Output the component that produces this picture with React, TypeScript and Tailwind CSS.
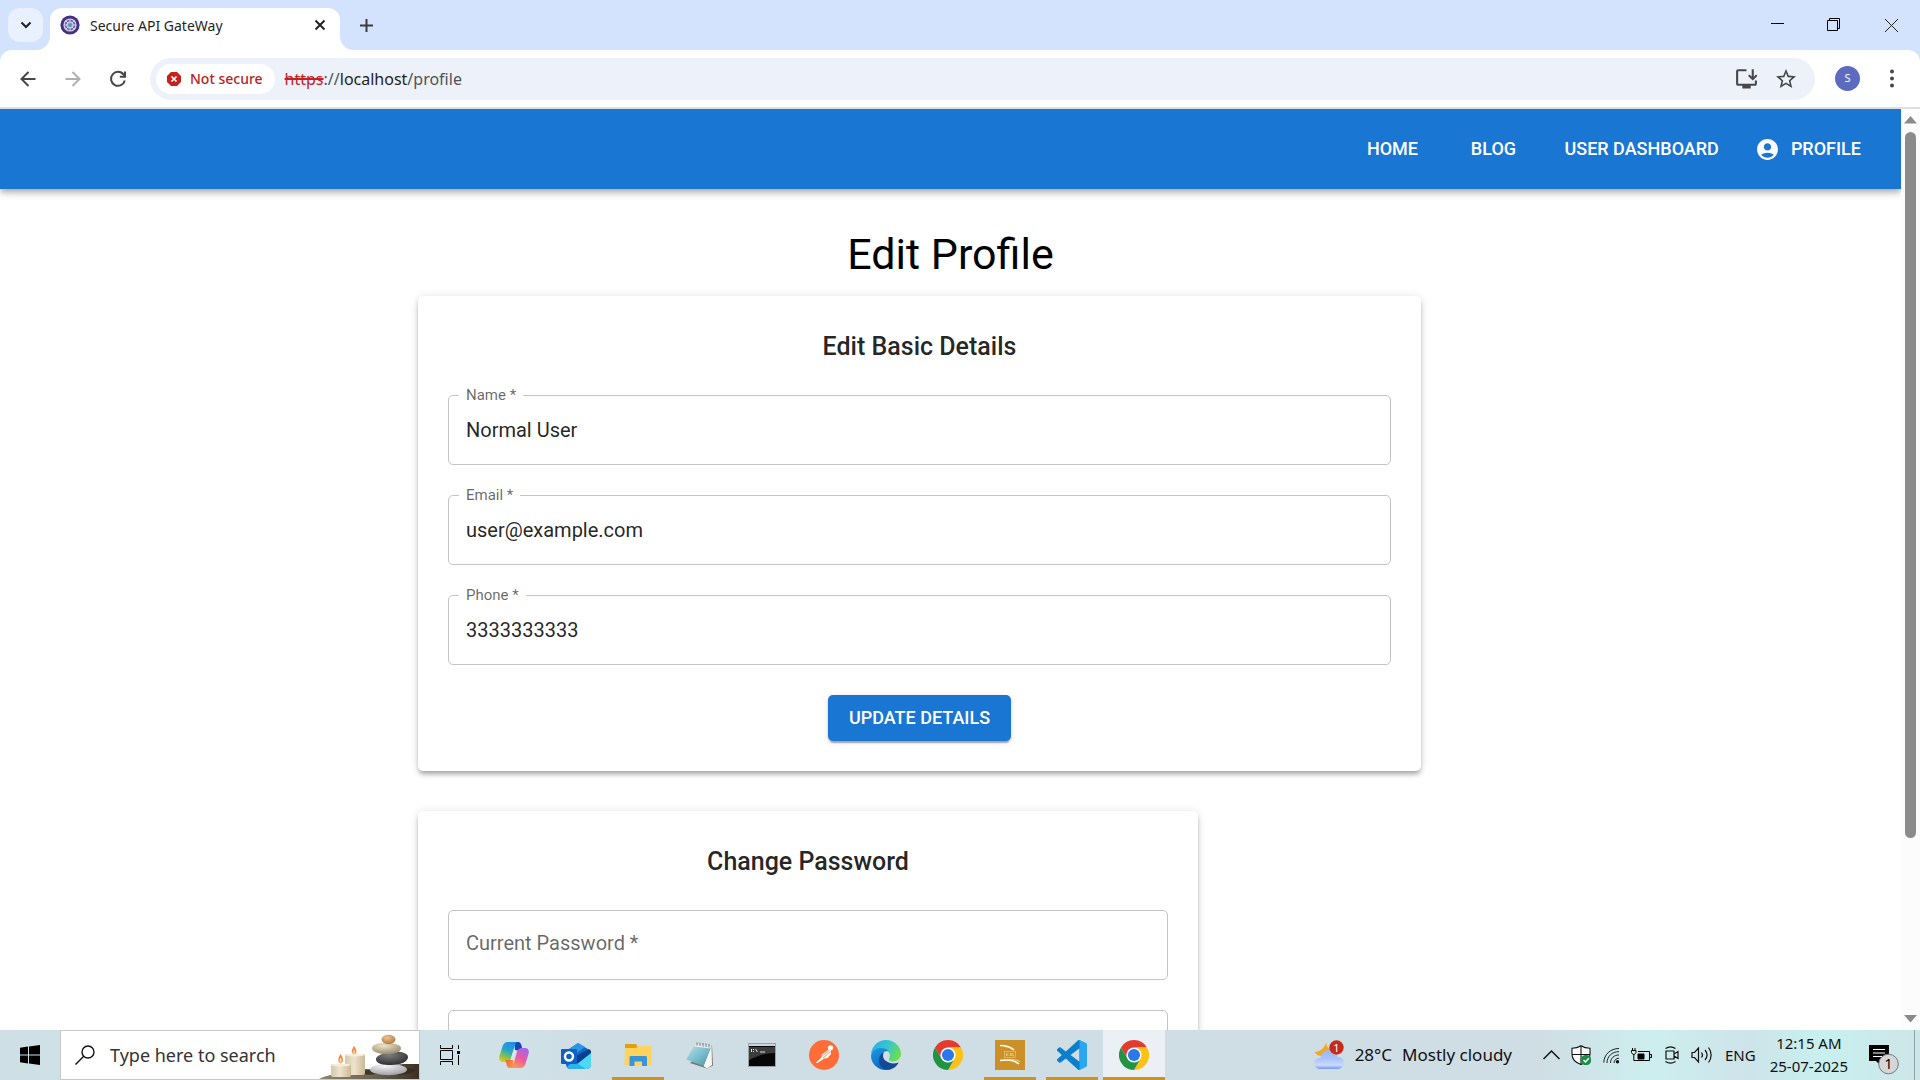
import React from "react";

const ui = "font-['Noto_Sans','Open_Sans',sans-serif]";

/* ---------- browser window ---------- */

function Favicon() {
  return (
    <svg viewBox="0 0 20 20" className="size-5 shrink-0">
      <circle cx="10" cy="10" r="9.6" fill="#46307f" />
      <circle cx="10" cy="10" r="6" fill="#6f62a6" stroke="#d9d5ec" strokeWidth="1.2" />
      <path d="M10 4v12M4 10h12M5.800 5.800l8.400 8.400M14.200 5.800l-8.400 8.400" stroke="#d6d3ea" strokeWidth="1" />
      <circle cx="10" cy="10" r="3.200" fill="#a9a3cf" stroke="#e6e3f3" strokeWidth="0.800" />
      <circle cx="10" cy="10" r="1.800" fill="#2fa6b2" />
    </svg>
  );
}

function TabStrip() {
  return (
    <div className="flex h-[50px] shrink-0 items-end justify-between bg-[#d3e3fd]">
      <div className="flex items-end">
        <button aria-label="Search tabs" className="mb-2 ml-2 grid h-[34px] w-[35px] place-items-center rounded-xl bg-[#e9f1fe]">
          <svg viewBox="0 0 12 8" className="h-2 w-3" fill="none" stroke="#1f1f1f" strokeWidth="2">
            <path d="M1.5 1.5 6 6l4.500-4.500" />
          </svg>
        </button>
        <div className="relative ml-[7px] flex h-[42px] w-[290px] items-center rounded-t-xl bg-white px-2.5 pb-2">
          <svg viewBox="0 0 14 14" className="absolute bottom-0 -left-[14px] size-[14px]">
            <path d="M14 0v14H0C8 14 14 8 14 0Z" fill="#fff" />
          </svg>
          <svg viewBox="0 0 14 14" className="absolute -right-[14px] bottom-0 size-[14px]">
            <path d="M0 0v14h14C6 14 0 8 0 0Z" fill="#fff" />
          </svg>
          <Favicon />
          <span className="ml-2.5 flex-1 text-[14px] text-[#1f1f1f]">Secure API GateWay</span>
          <button aria-label="Close tab" className="grid size-5 place-items-center">
            <svg viewBox="0 0 12 12" className="size-3" stroke="#1f1f1f" strokeWidth="1.9">
              <path d="m1.500 1.500 9 9M10.500 1.500l-9 9" />
            </svg>
          </button>
        </div>
        <button aria-label="New tab" className="mb-[18px] ml-5 grid size-[13px] place-items-center">
          <svg viewBox="0 0 13 13" className="size-[13px]" stroke="#3c3c3c" strokeWidth="2">
            <path d="M6.500 0v13M0 6.500h13" />
          </svg>
        </button>
      </div>
      <div className="flex h-full items-center">
        <button aria-label="Minimize" className="grid h-full w-14 place-items-center">
          <svg viewBox="0 0 13 13" className="size-[13px]" stroke="#000">
            <path d="M0 4.500h13" />
          </svg>
        </button>
        <button aria-label="Restore" className="grid h-full w-[57px] place-items-center">
          <svg viewBox="0 0 14 14" className="size-[14px]" fill="none" stroke="#000">
            <path d="M.5 2.500h10v10H.5zM2.500 2.500v-2h10v10h-2" />
          </svg>
        </button>
        <button aria-label="Close" className="grid h-full w-[58px] place-items-center">
          <svg viewBox="0 0 13 13" className="size-[13px]" stroke="#222">
            <path d="m0 0 13 13M13 0 0 13" />
          </svg>
        </button>
      </div>
    </div>
  );
}

function Toolbar() {
  return (
    <div className="shrink-0 bg-[#d3e3fd]">
      <div className="flex h-[59px] items-center rounded-t-xl border-b-2 border-[#dfdfdf] bg-white">
        <button aria-label="Back" className="ml-5 grid size-4 place-items-center">
          <svg viewBox="0 0 16 16" className="size-4" fill="none" stroke="#474747" strokeWidth="2">
            <path d="M15.500 8H2M8.500 1 1.500 8l7 7" />
          </svg>
        </button>
        <button aria-label="Forward" className="ml-[29px] grid size-4 place-items-center">
          <svg viewBox="0 0 16 16" className="size-4" fill="none" stroke="#b0b0b0" strokeWidth="2">
            <path d="M.5 8H14M7.500 1l7 7-7 7" />
          </svg>
        </button>
        <button aria-label="Reload" className="ml-7 grid size-[18px] place-items-center">
          <svg viewBox="0 0 18 18" className="size-[18px]" fill="none" stroke="#474747" strokeWidth="2">
            <path d="M15.800 10.500A7 7 0 1 1 14.600 4.600L16 6.500" />
            <path d="M16 1.500v5.200h-5.200" />
          </svg>
        </button>
        <div className="ml-[23px] flex h-[42px] flex-1 items-center rounded-full bg-[#ecf1fa] pl-1.5">
          <button className="flex h-[30px] items-center gap-[9px] rounded-full bg-white pr-3 pl-[11px] text-[14px] font-medium text-[#b3261e]">
            <svg viewBox="0 0 14 14" className="size-[14px]">
              <path d="M4 0h6l4 4v6l-4 4H4l-4-4V4Z" fill="#c5221f" />
              <path d="m4.500 4.500 5 5m0-5-5 5" stroke="#fff" strokeWidth="1.700" />
            </svg>
            Not secure
          </button>
          <div className="ml-2.5 flex-1 text-[16px] text-[#505356]">
            <span className="text-[#c5221f] line-through decoration-2">https</span>://
            <span className="text-[#1f1f1f]">localhost</span>/profile
          </div>
          <button aria-label="Install app" className="mr-[15px] size-[25px]">
            <svg viewBox="0 0 24 24" className="size-[25px]" fill="#474747">
              <path d="M20 17H4V5h8V3H4c-1.100 0-2 .9-2 2v12c0 1.100.9 2 2 2h4v2.500h8V19h4c1.100 0 2-.9 2-2v-3h-2v3z" />
              <path d="m18 14 4.500-4.500-1.400-1.400-2.100 2.100V3h-2v7.200l-2.100-2.100-1.400 1.400z" />
            </svg>
          </button>
          <button aria-label="Bookmark this tab" className="mr-[17px] size-6">
            <svg viewBox="0 0 24 24" className="size-6" fill="#474747">
              <path d="m22 9.240-7.190-.62L12 2 9.190 8.630 2 9.240l5.460 4.730L5.820 21 12 17.270 18.180 21l-1.630-7.030zM12 15.400l-3.760 2.270 1-4.280-3.320-2.880 4.380-.38L12 6.100l1.710 4.040 4.380.38-3.320 2.880 1 4.280z" />
            </svg>
          </button>
        </div>
        <button aria-label="Account" className="ml-5 grid size-[25px] place-items-center rounded-full bg-[#5c6bc0] text-[11px] text-white">
          S
        </button>
        <button aria-label="Menu" className="mr-[18px] ml-[22px] size-5">
          <svg viewBox="0 0 20 20" className="size-5" fill="#474747">
            <circle cx="10" cy="2.500" r="2" />
            <circle cx="10" cy="9.500" r="2" />
            <circle cx="10" cy="16.500" r="2" />
          </svg>
        </button>
      </div>
    </div>
  );
}

/* ---------- web page ---------- */

const navItem = "flex h-12 min-w-20 items-center justify-center px-2.5 pb-0.5";

function AppBar() {
  return (
    <nav className="relative z-10 flex h-20 items-center justify-end gap-[21px] bg-[#1976d2] pr-[30px] text-[18px] font-medium text-white shadow-[0_2px_5px_-1px_rgba(0,0,0,.2),0_5px_6px_0_rgba(0,0,0,.14),0_1px_12px_0_rgba(0,0,0,.12)]">
      <a href="#home" className={navItem}>HOME</a>
      <a href="#blog" className={navItem}>BLOG</a>
      <a href="#dashboard" className={navItem}>USER DASHBOARD</a>
      <a href="#profile" className="flex h-12 items-center gap-[11px] pr-2.5 pl-[5px]">
        <svg viewBox="0 0 24 24" className="size-[25px]" fill="currentColor">
          <path d="M12 2C6.480 2 2 6.480 2 12s4.480 10 10 10 10-4.480 10-10S17.520 2 12 2m0 4c1.930 0 3.500 1.570 3.500 3.500S13.930 13 12 13s-3.500-1.570-3.500-3.500S10.070 6 12 6m0 14c-2.030 0-4.430-.82-6.140-2.880C7.550 15.800 9.680 15 12 15s4.450.8 6.140 2.120C16.430 19.180 14.030 20 12 20" />
        </svg>
        <span className="pb-0.5">PROFILE</span>
      </a>
    </nav>
  );
}

const inputBox =
  "block h-[70px] w-full rounded-[5px] border border-[#c4c4c4] bg-transparent px-[17px] text-[20px] text-black/87 outline-none";

function Field({ id, label, value, type = "text" }: { id: string; label: string; value?: string; type?: string }) {
  return (
    <div className="relative">
      <input id={id} type={type} defaultValue={value} className={inputBox} />
      {value ? (
        <label htmlFor={id} className="absolute -top-2.5 left-[11px] bg-white px-[7px] text-[15px] leading-5 text-black/60">
          {label} *
        </label>
      ) : (
        <label htmlFor={id} className="absolute top-[19px] left-[18px] text-[20px] leading-7 text-black/60">
          {label} *
        </label>
      )}
    </div>
  );
}

function Card({ title, className, children }: { title: string; className: string; children: React.ReactNode }) {
  return (
    <form
      className={
        "flex w-full flex-col gap-[30px] rounded-[5px] bg-white p-[30px] shadow-[0_4px_4px_-2px_rgba(0,0,0,.2),0_4px_5px_0_rgba(0,0,0,.14),0_1px_10px_0_rgba(0,0,0,.12)] " +
        className
      }
    >
      <h2 className="pt-[3px] text-center text-[25px] leading-9 font-medium text-black/87">{title}</h2>
      {children}
    </form>
  );
}

function WebPage() {
  return (
    <div className="flex min-h-0 flex-1 bg-white">
      <div className="min-w-0 flex-1 overflow-hidden font-['Roboto',sans-serif]">
        <AppBar />
        <h1 className="mt-[39px] mb-4 text-center text-[43px] leading-[52px] text-black">Edit Profile</h1>
        <div className="mx-auto flex max-w-[1125px] flex-col gap-10 px-[30px]">
          <Card title="Edit Basic Details" className="max-w-[1003px]">
            <Field id="name" label="Name" value="Normal User" />
            <Field id="email" label="Email" value="user@example.com" />
            <Field id="phone" label="Phone" value="3333333333" />
            <button
              type="button"
              className="h-[46px] self-center rounded-[5px] bg-[#1976d2] px-[21px] pb-0.5 text-[18px] font-medium text-white shadow-[0_4px_1px_-2px_rgba(0,0,0,.2),0_2px_2px_0_rgba(0,0,0,.14),0_1px_6px_0_rgba(0,0,0,.12)]"
            >
              UPDATE DETAILS
            </button>
          </Card>
          <Card title="Change Password" className="max-w-[780px]">
            <Field id="current" label="Current Password" type="password" />
            <input type="password" aria-label="New Password" className={inputBox} />
          </Card>
        </div>
      </div>
      <div className="flex w-[19px] shrink-0 flex-col items-center bg-[#fcfcfc] py-[7px]">
        <svg viewBox="0 0 13 8" className="h-2 w-[13px]" fill="#8b8b8b">
          <path d="M6.500 0 13 7.500H0Z" />
        </svg>
        <div className="mt-2 w-[11px] flex-[707] rounded-full bg-[#8b8b8b]" />
        <div className="flex-[177]" />
        <svg viewBox="0 0 13 8" className="h-2 w-[13px]" fill="#8b8b8b">
          <path d="M6.500 7.500 0 0h13Z" />
        </svg>
      </div>
    </div>
  );
}

/* ---------- task bar ---------- */

function SearchScene() {
  return (
    <svg viewBox="0 0 100 48" className="h-12 w-[100px] shrink-0">
      <defs>
        <linearGradient id="ground" x1="0" x2="1">
          <stop offset="0" stopColor="#8c8672" />
          <stop offset="0.500" stopColor="#6f6755" />
          <stop offset="1" stopColor="#3b3022" />
        </linearGradient>
        <linearGradient id="wax" x1="0" x2="1">
          <stop offset="0" stopColor="#d5c8ac" />
          <stop offset="0.450" stopColor="#ede3ce" />
          <stop offset="1" stopColor="#cbb994" />
        </linearGradient>
        <radialGradient id="s1" cx=".4" cy=".3" r=".8">
          <stop offset="0" stopColor="#edc28c" />
          <stop offset="1" stopColor="#a8733d" />
        </radialGradient>
        <radialGradient id="s2" cx=".4" cy=".25" r=".8">
          <stop offset="0" stopColor="#eee3c8" />
          <stop offset="1" stopColor="#96876a" />
        </radialGradient>
        <radialGradient id="s3" cx=".4" cy=".25" r=".8">
          <stop offset="0" stopColor="#7d7d80" />
          <stop offset="1" stopColor="#2b2b2e" />
        </radialGradient>
        <radialGradient id="s4" cx=".4" cy=".2" r=".8">
          <stop offset="0" stopColor="#f7f7f9" />
          <stop offset="1" stopColor="#9d9da3" />
        </radialGradient>
      </defs>
      <path d="M0 48c8-4 20-6 35-7 20-2 35-7 50-8h15v15Z" fill="url(#ground)" />
      <path d="M44 43c8 2 22-1 20-4l-18-1ZM70 43c10 2 24 0 27-4l-12-3Z" fill="#33291d" opacity="0.800" />
      <rect x="26" y="23" width="20" height="21" rx="2" fill="url(#wax)" />
      <ellipse cx="36" cy="24" rx="9.500" ry="1.500" fill="#f5eedf" />
      <rect x="12" y="33" width="20" height="13" rx="2" fill="url(#wax)" />
      <ellipse cx="22" cy="34" rx="9.500" ry="1.500" fill="#f5eedf" />
      <path d="M35 15c3 3.500 3.500 7.500.5 8-3.500 0-3.500-4-.5-8ZM21.500 23c3 3.500 3.500 8.500.5 9-3.500 0-3.500-4.500-.5-9Z" fill="#f58a45" />
      <path d="M35 18.500c1.500 2 1.500 3.800.3 4-1.500 0-1.500-2-.3-4ZM21.500 26.500c1.500 2 1.500 4.500.3 4.800-1.500 0-1.500-2.800-.3-4.800Z" fill="#ffe09a" />
      <ellipse cx="69.500" cy="38.500" rx="18.500" ry="5.800" fill="url(#s4)" />
      <path d="M57 29c-1-4 6-7 15-8 10-1 17 1 17 5 0 5-8 8-17 8-8 0-14-1-15-5Z" fill="url(#s3)" />
      <path d="M53 17c0-4 8-5 15-5s14 2 14 5c0 4-6 6-14 6s-15-2-15-6Z" fill="url(#s2)" />
      <ellipse cx="69.500" cy="8.500" rx="7" ry="4.700" fill="url(#s1)" />
    </svg>
  );
}

function TaskView() {
  return (
    <svg viewBox="0 0 20 20" className="size-5" fill="none" stroke="#000">
      <path d="M.5 0v3.500h12V0M.5 20v-3.500h12V20M.5 5.500h12v9H.5ZM18.500 0v4M18.500 10v10" />
      <path d="M17 6h3v3h-3z" fill="#000" stroke="none" />
    </svg>
  );
}

function Copilot() {
  return (
    <svg viewBox="0 0 30 28" className="h-7 w-[30px]">
      <defs>
        <linearGradient id="cpA" x1=".7" y1="0" x2=".3" y2="1">
          <stop offset="0" stopColor="#1b8fe8" />
          <stop offset="0.450" stopColor="#2aa5c9" />
          <stop offset="0.750" stopColor="#7fc24a" />
          <stop offset="1" stopColor="#e8c21f" />
        </linearGradient>
        <linearGradient id="cpB" x1=".7" y1="0" x2=".2" y2="1">
          <stop offset="0" stopColor="#a864e8" />
          <stop offset="0.500" stopColor="#ec5b9c" />
          <stop offset="1" stopColor="#ff9a50" />
        </linearGradient>
        <linearGradient id="cpC" x1="0" y1="0" x2="1" y2="1">
          <stop offset="0" stopColor="#f4553c" />
          <stop offset="1" stopColor="#f9a04a" />
        </linearGradient>
      </defs>
      <path d="M15 1h4c2 0 3 1.500 3.500 3.500L23.500 9H20c-2 0-3 1-3.500 3Z" fill="#1448b8" />
      <path d="M9 1h9c-1.500 1-2 2.500-3 6l-3 10c-1 3-2.500 4-5 4H4c-3 0-4.500-2.500-3.500-6L3.500 5.500C4.500 2.500 6 1 9 1Z" fill="url(#cpA)" />
      <path d="M15 27H11c-2 0-3-1.500-3.500-3.500L6.500 19H10c2 0 3-1 3.500-3Z" fill="url(#cpC)" />
      <path d="M21 27h-9c1.500-1 2-2.500 3-6l3-10c1-3 2.500-4 5-4h3c3 0 4.500 2.500 3.500 6l-3 9.500C25.500 25.500 24 27 21 27Z" fill="url(#cpB)" />
      <path d="M14.500 9h3.200l-3 10h-3Z" fill="#dce6ea" />
    </svg>
  );
}

function Outlook() {
  return (
    <svg viewBox="0 0 30 27" className="h-[27px] w-[30px]">
      <path d="M5 9 17 1l13 8v13c0 3-2 5-5 5H10c-3 0-5-2-5-5Z" fill="#1267c4" />
      <path d="M5 9 17 1l7 4L9 16Z" fill="#2a96e6" />
      <path d="M28 7l2 2v4L14 23l-4-6Z" fill="#0b3f8f" />
      <path d="M30 11v11c0 3-2 5-5 5H10L30 11Z" fill="#4fd8f5" />
      <path d="M12 19l13 8H10c-2 0-3-1-4-2Z" fill="#2cb2ec" />
      <rect x="0" y="7" width="16" height="15" rx="1" fill="#0f62c0" />
      <circle cx="8" cy="14.500" r="4" fill="none" stroke="#fff" strokeWidth="2.400" />
    </svg>
  );
}

function Explorer() {
  return (
    <svg viewBox="0 0 28 24" className="h-6 w-7">
      <path d="M1 1h11l2 3-2 3H1Z" fill="#e0a010" />
      <path d="M1 5h11l2-2h12c1 0 1.500.5 1.500 1.500V21c0 1-.5 1.500-1.500 1.500H2c-1 0-1.500-.5-1.500-1.500Z" fill="#ffd35c" />
      <path d="M5.500 23V14.500c0-1 .5-1.500 1.500-1.500h14.500c1 0 1.500.5 1.500 1.500V23h-5v-4.500h-7.500V23Z" fill="#3a95d8" />
    </svg>
  );
}

function Notepad() {
  return (
    <svg viewBox="0 0 28 27" className="h-[27px] w-7">
      <defs>
        <linearGradient id="np" x1="0" y1="0" x2="1" y2="1">
          <stop offset="0" stopColor="#bfe3ea" />
          <stop offset="0.500" stopColor="#7fc0d0" />
          <stop offset="1" stopColor="#4a93a8" />
        </linearGradient>
      </defs>
      <path d="m26 3.500 1 20-6 3L4 21Z" fill="#777a70" />
      <path d="m25.500 4-8 20 3.500 2.500 5-3.500Z" fill="#f7f7f2" />
      <path d="M10 1.500 25.500 3.500l-8 20.500L0 17.500Z" fill="url(#np)" />
      <path d="M10 1.500 25.500 3.500l-.8 3L8.500 4.500Z" fill="#e9edec" />
      <path d="M11 .5v3M14 .8v3M17 1v3.500M20 1.500v3.500M23 2v3.500" stroke="#666" strokeWidth="0.900" />
    </svg>
  );
}

function Terminal() {
  return (
    <svg viewBox="0 0 28 24" className="h-6 w-7">
      <rect x="0.500" y="0.500" width="27" height="23" fill="#070707" stroke="#9aa3a8" />
      <rect x="1" y="1" width="26" height="2" fill="#cdd3d6" />
      <path d="M1 4h26v6C18 10 9 13 1 17Z" fill="#3c3c3c" />
      <path d="M3.500 6v3M5.500 6v1M5.500 8v1M7.500 6l2 3M12 9h5" stroke="#ddd" />
    </svg>
  );
}

function Postman() {
  return (
    <svg viewBox="0 0 30 30" className="size-[30px]">
      <circle cx="15" cy="15" r="15" fill="#ff6c37" />
      <circle cx="21.500" cy="7.800" r="2.600" fill="#fff" />
      <path d="M19.500 9.500 13 14.500l-1.500 4L7 22.500l1 .8 5.500-3.500 1-1 4-.8 3.500-4-.5-3.500Z" fill="#fff" />
      <path d="m12 17 8-6.500M14 18l7-6" stroke="#ff6c37" strokeWidth="0.700" />
    </svg>
  );
}

function Edge() {
  return (
    <svg viewBox="0 0 32 32" className="size-[30px]">
      <defs>
        <linearGradient id="edA" x1="0" y1=".2" x2="1" y2=".6">
          <stop offset="0" stopColor="#2bb0e8" />
          <stop offset="0.500" stopColor="#36c5cf" />
          <stop offset="1" stopColor="#6fe04a" />
        </linearGradient>
        <linearGradient id="edB" x1="0" y1="0" x2=".6" y2="1">
          <stop offset="0" stopColor="#1c9ce4" />
          <stop offset="1" stopColor="#0c62be" />
        </linearGradient>
      </defs>
      <path d="M0 15C1 6 8 0 16 0c9 0 16 7 16 14.500C32 20 28 23 23.500 23c-4 0-5-1.500-4-3.500C22 15 18 10 12 10 7 10 3 12 0 15Z" fill="url(#edA)" />
      <path d="M0 17C1 8 13 6 19 12c-5-1-8 3-8 8 0 6 5 10 11 11-2 .7-4 1-6 1C7 32 0 25 0 17Z" fill="url(#edB)" />
      <path d="M14 13c-2 2.500-1.500 7 2 9.500 4 3 9 3 13.500 1.500C27 29 22 32 17 31.500c-6 0-9-6-8.500-11C9 16.500 11 14 14 13Z" fill="#124a98" />
    </svg>
  );
}

function Chrome() {
  return (
    <svg viewBox="0 0 48 48" className="size-[30px]">
      <circle cx="24" cy="24" r="13" fill="#fff" />
      <path d="M24 12h20.780a23.990 23.990 0 0 0-41.560 0L13.600 30A11.990 11.990 0 0 1 24 12Z" fill="#e33b2e" />
      <path d="M34.390 30 24 48a23.990 23.990 0 0 0 20.780-36H24a11.990 11.990 0 0 1 10.390 18Z" fill="#fbc116" />
      <path d="M13.610 30 3.220 12A23.990 23.990 0 0 0 24 48l10.390-18a11.990 11.990 0 0 1-20.780 0Z" fill="#229342" />
      <circle cx="24" cy="24" r="9.700" fill="#2b78ea" />
    </svg>
  );
}

function Kali() {
  return (
    <svg viewBox="0 0 30 30" className="size-[30px]">
      <rect width="30" height="30" fill="#cb9127" />
      <path d="M5 5.500c6 0 11 1.500 14 4.500M5 20.500c7-1 14-.5 19 3.500" fill="none" stroke="#fff" strokeWidth="1.500" />
      <path d="M9 6.500c4 .5 7 1.500 9 3.500M12 19.500c6 0 10 .5 13 2" fill="none" stroke="#f4e6c8" strokeWidth="0.800" />
      <rect x="9.500" y="11.500" width="11" height="6" fill="none" stroke="#e3c587" strokeWidth="0.700" />
      <path d="M11.500 13v3M13.500 13l-1.500 1.500 1.500 1.500M15 16l.8-3 .8 3M18 13v3h1" fill="none" stroke="#efdcb4" strokeWidth="0.700" />
    </svg>
  );
}

function VsCode() {
  return (
    <svg viewBox="0 0 24 24" className="size-[30px]">
      <path
        d="M23.150 2.587 18.210.21a1.494 1.494 0 0 0-1.705.29l-9.460 8.630-4.120-3.128a.999.999 0 0 0-1.276.057L.327 7.261A1 1 0 0 0 .326 8.740L3.899 12 .326 15.260a1 1 0 0 0 .001 1.479L1.650 17.940a.999.999 0 0 0 1.276.057l4.120-3.128 9.460 8.630a1.492 1.492 0 0 0 1.704.29l4.942-2.377A1.500 1.500 0 0 0 24 20.060V3.939a1.500 1.500 0 0 0-.85-1.352zm-5.146 14.861L10.826 12l7.178-5.448v10.896z"
        fill="#0a7fcb"
      />
      <path d="M18 .2 23.150 2.587c.5.200.85.700.85 1.352V20.060c0 .6-.3 1.100-.85 1.352L18 23.800Z" fill="#2aa6f2" />
    </svg>
  );
}

const apps = [
  { name: "Copilot", icon: <Copilot />, running: false, active: false },
  { name: "Outlook", icon: <Outlook />, running: false, active: false },
  { name: "File Explorer", icon: <Explorer />, running: true, active: false },
  { name: "Notepad", icon: <Notepad />, running: false, active: false },
  { name: "Command Prompt", icon: <Terminal />, running: false, active: false },
  { name: "Postman", icon: <Postman />, running: false, active: false },
  { name: "Edge", icon: <Edge />, running: false, active: false },
  { name: "Chrome", icon: <Chrome />, running: false, active: false },
  { name: "Kali", icon: <Kali />, running: true, active: false },
  { name: "Visual Studio Code", icon: <VsCode />, running: true, active: false },
  { name: "Chrome window", icon: <Chrome />, running: true, active: true },
];

function Weather() {
  return (
    <svg viewBox="0 0 30 30" className="size-[30px]">
      <defs>
        <linearGradient id="cloud" x1="0" y1="0" x2="0" y2="1">
          <stop offset="0" stopColor="#94b8f5" />
          <stop offset="0.450" stopColor="#a9c3f8" />
          <stop offset="0.800" stopColor="#cbdafc" />
          <stop offset="1" stopColor="#7297ea" />
        </linearGradient>
      </defs>
      <path d="M12.500 1c-1 4 1 7 5 9l-5 6C7 17 2.500 15.500.5 12 6 12 11 8 12.500 1Z" fill="#f5a623" />
      <path d="M7 29c-4 0-6.800-2-6.800-5.500S3 18 6.500 18c.5-5 4-8 8.500-8s7.500 3 8.500 7c4 0 6.300 2.700 6.300 6S27 29 23.500 29Z" fill="url(#cloud)" />
      <circle cx="22.500" cy="7.500" r="7.200" fill="#c42b1c" />
      <text x="22.500" y="11.500" textAnchor="middle" fontSize="11" fill="#fff" className={ui}>1</text>
    </svg>
  );
}

function Tray() {
  return (
    <div className="flex items-center">
      <button aria-label="Show hidden icons" className="h-5 w-[17px]">
        <svg viewBox="0 0 17 20" className="h-5 w-[17px]" fill="none" stroke="#111" strokeWidth="1.500">
          <path d="m.5 14 8-8 8 8" />
        </svg>
      </button>
      <svg viewBox="0 0 20 20" className="ml-[11px] size-5">
        <path d="M10 .7c2.500 1.800 5.500 2.500 9 2.500v6c0 5-4 8.500-9 10.300C5 17.700 1 14.200 1 9.200v-6c3.500 0 6.500-.7 9-2.500Z" fill="#fff" stroke="#111" strokeWidth="1.100" />
        <path d="M10 1v18M1 9.500h18" stroke="#111" strokeWidth="1.100" />
        <circle cx="15" cy="15" r="5.300" fill="#1a8f48" />
        <path d="m12.500 15 2 2 3.300-3.800" fill="none" stroke="#fff" strokeWidth="1.400" />
      </svg>
      <svg viewBox="0 0 17 17" className="ml-3 size-[17px]" fill="none" stroke="#222">
        <path d="M.8 15.500C1 7.500 7.500 1.500 16 1.500M4 16C4 9.500 9 4.500 16 4.700M7.500 16c0-4.500 3.500-8.200 8.500-8M11 16c0-2.500 2-4.800 5-4.800" />
        <circle cx="14.500" cy="14.800" r="1.700" fill="#111" stroke="none" />
      </svg>
      <svg viewBox="0 0 21 16" className="ml-[11px] h-4 w-[21px]" fill="none" stroke="#000">
        <path d="M5.500 13.500h13v-9H7M18.500 7.500h2v3h-2M1.500 1v2.500M4 1v2.500M.5 3.500h4.500v2l-1.500 2H2L.5 5.500ZM2.800 8v5.500h3" />
        <path d="M7 7h6v5H7z" fill="#000" />
      </svg>
      <svg viewBox="0 0 16 18" className="ml-3 h-[18px] w-4" fill="none" stroke="#111" strokeWidth="1.200">
        <path d="M2 5h8v8H2ZM10 8l4-2.500v7L10 10M1.500 2.500c3-2 7-2 10 0M1.500 15.500c3 2 7 2 10 0" />
      </svg>
      <svg viewBox="0 0 22 18" className="ml-[11px] h-[18px] w-[22px]" fill="none" stroke="#111" strokeWidth="1.200">
        <path d="M1 6.500h2.500L7.500 2v14L3.500 11.500H1ZM10.500 6.500c1.200 1.500 1.200 3.500 0 5M14 4c2.500 3 2.500 7 0 10M17.500 1.500c3.500 4.500 3.500 10.500 0 15" />
      </svg>
      <span className="ml-3 text-[15px]">ENG</span>
      <div className="ml-3.5 text-center text-[15px] leading-[23px]">
        <div>12:15 AM</div>
        <div>25-07-2025</div>
      </div>
    </div>
  );
}

function Taskbar() {
  return (
    <footer className="flex h-[50px] shrink-0 items-center bg-[linear-gradient(90deg,#cfdfe6,#d0e2e8_25%,#cfdde4_32%,#cfdde4_80%,#cdeeef_86%,#cde4ea_91%,#c8f0ee_95%,#cde6e8)] text-[#111]">
      <button aria-label="Start" className="grid h-full w-[60px] place-items-center">
        <svg viewBox="0 0 20 20" className="size-5" fill="#000">
          <path d="M0 2.800 8 1.600v7.900H0ZM9 1.500 20 0v9.500H9ZM0 10.500h8v7.900L0 17.300ZM9 10.500h11V20L9 18.500Z" />
        </svg>
      </button>
      <label className="flex h-full w-[360px] items-center border border-[#c8c8c8] bg-white pl-3.5">
        <svg viewBox="0 0 20 20" className="size-5 shrink-0" fill="none" stroke="#111" strokeWidth="1.400">
          <circle cx="13" cy="7" r="6" />
          <path d="M8.700 11.300.5 19.500" />
        </svg>
        <input
          aria-label="Search"
          placeholder="Type here to search"
          className="ml-[15px] min-w-0 flex-1 bg-transparent text-[18px] outline-none placeholder:text-[#333]"
        />
        <SearchScene />
      </label>
      <button aria-label="Task view" className="mr-[3px] grid h-full w-[60px] place-items-center">
        <TaskView />
      </button>
      {apps.map((app) => (
        <button
          key={app.name}
          aria-label={app.name}
          className={"relative grid h-full w-[62px] place-items-center " + (app.active ? "bg-[#ebf0f4]" : "")}
        >
          {app.icon}
          {app.running && (
            <span className={"absolute bottom-0 h-[3px] bg-[#cb9127] " + (app.active ? "inset-x-0" : "inset-x-[5px]")} />
          )}
        </button>
      ))}
      <div className="ml-auto flex h-full items-center">
        <button className="mr-[31px] flex items-center text-[17px]">
          <Weather />
          <span className="ml-[11px]">28°C</span>
          <span className="ml-2.5">Mostly cloudy</span>
        </button>
        <Tray />
        <button aria-label="Notifications" className="mt-2.5 ml-[21px] size-[30px]">
          <svg viewBox="0 0 30 30" className="size-[30px]">
            <path d="M0 0h20v16h-9v4l-4-4H0Z" fill="#000" />
            <path d="M4 4.500h12M4 8h12M4 11.500h9" stroke="#fff" strokeWidth="1.200" />
            <circle cx="19.500" cy="19" r="9.800" fill="#d4d6d8" stroke="#77797b" />
            <text x="19.500" y="24" textAnchor="middle" fontSize="14" fill="#000" className={ui}>1</text>
          </svg>
        </button>
        <div className="ml-[15px] h-full w-1.5 border-l border-[#8fa5aa]" />
      </div>
    </footer>
  );
}

export default function App() {
  return (
    <div className={"flex h-screen flex-col overflow-hidden " + ui}>
      <TabStrip />
      <Toolbar />
      <WebPage />
      <Taskbar />
    </div>
  );
}
